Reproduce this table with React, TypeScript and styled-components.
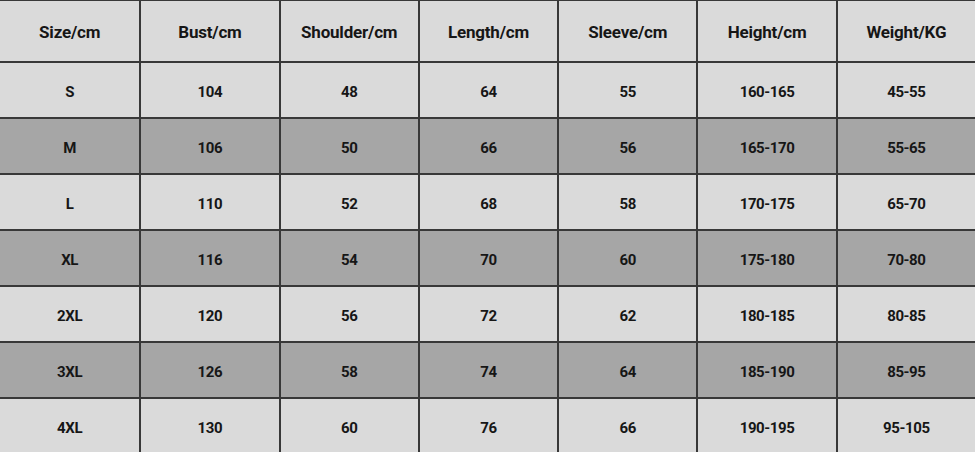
import styled, { createGlobalStyle } from 'styled-components'

const GlobalStyle = createGlobalStyle`
  html, body {
    margin: 0;
    padding: 0;
    background: #dadada;
  }
  body {
    font-family: Roboto, "Liberation Sans", sans-serif;
    overflow: hidden;
  }
`

const Table = styled.div`
  width: 975px;
  height: 452px;
  overflow: hidden;
  display: flex;
  flex-direction: column;
  background: #dadada;
`

const Row = styled.div<{ $dark?: boolean; $head?: boolean }>`
  display: grid;
  grid-template-columns: repeat(7, 1fr);
  flex: none;
  height: ${(p) => (p.$head ? '60px' : '54px')};
  border-top: ${(p) => (p.$head ? '1px' : '2px')} solid #383838;
  background: ${(p) => (p.$dark ? '#a6a6a6' : '#dadada')};
`

const Cell = styled.div<{ $head?: boolean }>`
  display: flex;
  align-items: center;
  justify-content: center;
  padding-top: ${(p) => (p.$head ? '2px' : '3px')};
  box-sizing: border-box;
  color: #161616;
  font-weight: 700;
  font-size: ${(p) => (p.$head ? '17px' : '15px')};
  letter-spacing: ${(p) => (p.$head ? '-0.2px' : '-0.4px')};
  & + & {
    border-left: 2px solid #383838;
  }
`

const headers = [
  'Size/cm',
  'Bust/cm',
  'Shoulder/cm',
  'Length/cm',
  'Sleeve/cm',
  'Height/cm',
  'Weight/KG',
]

const rows = [
  ['S', '104', '48', '64', '55', '160-165', '45-55'],
  ['M', '106', '50', '66', '56', '165-170', '55-65'],
  ['L', '110', '52', '68', '58', '170-175', '65-70'],
  ['XL', '116', '54', '70', '60', '175-180', '70-80'],
  ['2XL', '120', '56', '72', '62', '180-185', '80-85'],
  ['3XL', '126', '58', '74', '64', '185-190', '85-95'],
  ['4XL', '130', '60', '76', '66', '190-195', '95-105'],
]

const App = () => {
  return (
    <>
      <GlobalStyle />
      <Table>
        <Row $head>
          {headers.map((h) => (
            <Cell $head key={h}>
              {h}
            </Cell>
          ))}
        </Row>
        {rows.map((r, i) => (
          <Row key={r[0]} $dark={i % 2 === 1}>
            {r.map((v, j) => (
              <Cell key={j}>{v}</Cell>
            ))}
          </Row>
        ))}
      </Table>
    </>
  )
}

export default App
